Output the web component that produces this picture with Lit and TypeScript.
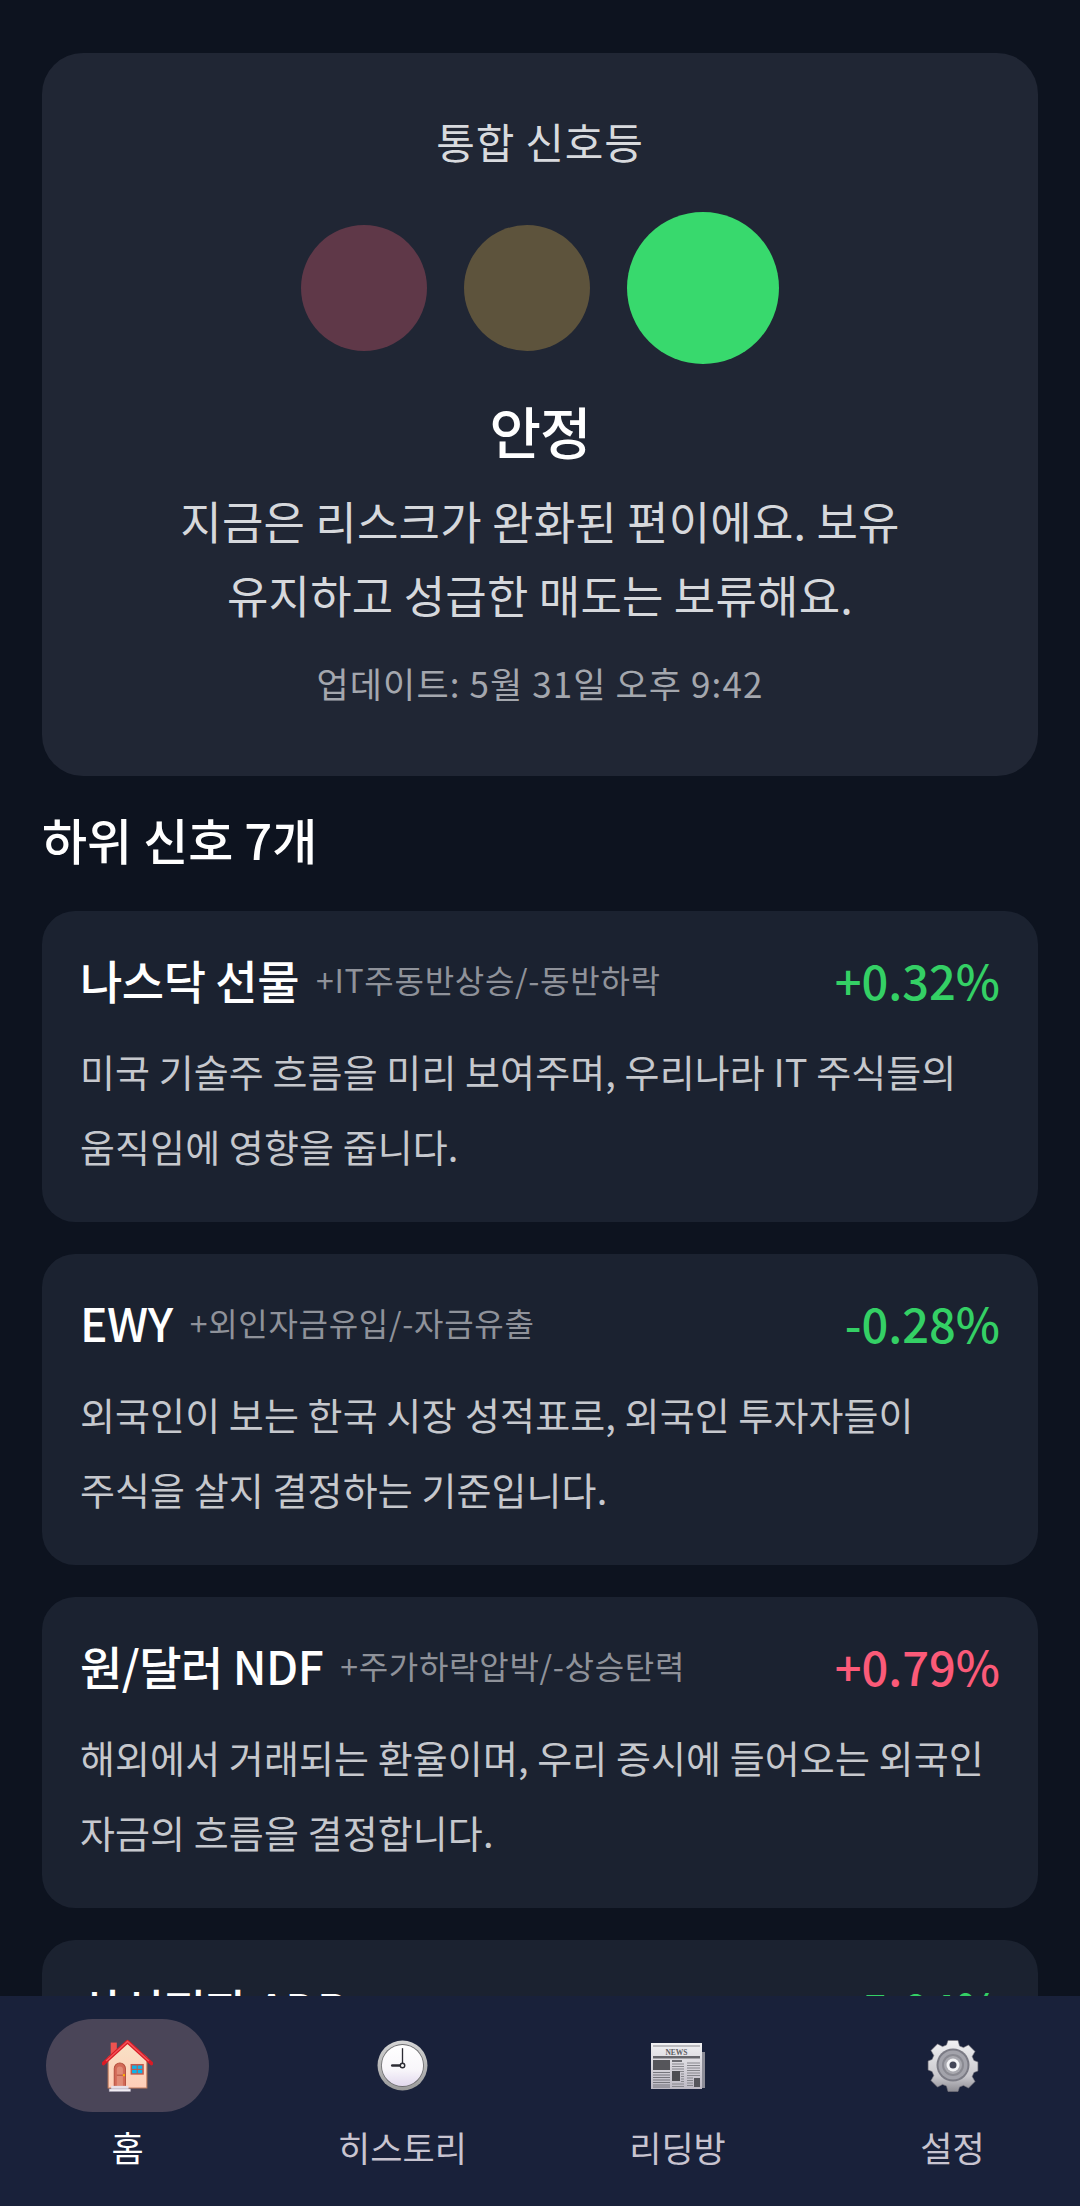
import { LitElement, html, css, svg } from 'lit';
import { customElement } from 'lit/decorators.js';

const signals = [
  { name: '나스닥 선물', hint: '+IT주동반상승/-동반하락', value: '+0.32%', tone: 'up', text: ['미국 기술주 흐름을 미리 보여주며, 우리나라 IT 주식들의', '움직임에 영향을 줍니다.'] },
  { name: 'EWY', hint: '+외인자금유입/-자금유출', value: '-0.28%', tone: 'up', text: ['외국인이 보는 한국 시장 성적표로, 외국인 투자자들이', '주식을 살지 결정하는 기준입니다.'] },
  { name: '원/달러 NDF', hint: '+주가하락압박/-상승탄력', value: '+0.79%', tone: 'down', text: ['해외에서 거래되는 환율이며, 우리 증시에 들어오는 외국인', '자금의 흐름을 결정합니다.'] },
  { name: '삼성전자 ADR', hint: '', value: '-5.04%', tone: 'up', text: ['삼성전자 주가의 흐름을 미리 보여줍니다.'] },
];

const houseIcon = svg`
  <svg viewBox="0 0 50 52" width="51" height="53">
    <defs>
      <linearGradient id="wall" x1="0" y1="0" x2="0" y2="1"><stop offset="0" stop-color="#f8e2c6"/><stop offset="1" stop-color="#ffcdb8"/></linearGradient>
    </defs>
    <rect x="8.500" y="3.500" width="6" height="12" fill="#ef5350"/>
    <path d="M6 18 25 3 44 18V48H6Z" fill="url(#wall)" stroke="#c57d5c" stroke-width="1"/>
    <path d="M1.500 24 25 2.500 48.500 24" fill="none" stroke="#d81b25" stroke-width="3.600" stroke-linejoin="round" stroke-linecap="round"/>
    <path d="M4 21.500 25 2.500 46 21.500" fill="none" stroke="#f4545a" stroke-width="1.400"/>
    <path d="M12 47V29a5.500 5.500 0 0 1 11 0V47Z" fill="#d26a58" stroke="#b5503f" stroke-width="1"/>
    <path d="M14.500 47V30a3 3 0 0 1 6 0V47Z" fill="#e08a76"/>
    <rect x="14.500" y="35" width="6" height="1" fill="#b5503f"/>
    <rect x="20.500" y="34.500" width="2" height="2" fill="#ffb300"/>
    <rect x="28" y="24.500" width="13" height="10.500" fill="#c9584a"/>
    <rect x="29.500" y="26" width="4.500" height="3.300" fill="#0fb4ea"/>
    <rect x="35" y="26" width="4.500" height="3.300" fill="#0fb4ea"/>
    <rect x="29.500" y="30.300" width="4.500" height="3.300" fill="#0fb4ea"/>
    <rect x="35" y="30.300" width="4.500" height="3.300" fill="#0fb4ea"/>
    <rect x="9" y="46" width="17" height="3" fill="#e6dfe8"/>
    <rect x="7" y="49" width="21" height="2.500" fill="#f3eef5" stroke="#a79fb0" stroke-width=".5"/>
  </svg>`;

const clockIcon = svg`
  <svg viewBox="0 0 50 52" width="51" height="53">
    <defs>
      <linearGradient id="rim" x1="0" y1="0" x2="0" y2="1"><stop offset="0" stop-color="#d6d6d6"/><stop offset="1" stop-color="#9a9a9a"/></linearGradient>
      <linearGradient id="face" x1="0" y1="0" x2="0" y2="1"><stop offset="0" stop-color="#ffffff"/><stop offset=".6" stop-color="#f8f6fa"/><stop offset="1" stop-color="#e2d9ee"/></linearGradient>
    </defs>
    <circle cx="25" cy="26" r="24.500" fill="url(#rim)"/>
    <circle cx="25" cy="26" r="21" fill="#6d6d70"/>
    <circle cx="25" cy="26" r="20.200" fill="url(#face)"/>
    <path d="M25 9V26" stroke="#2c2c34" stroke-width="1.300"/>
    <path d="M15 26H25" stroke="#2c2c34" stroke-width="2.600" stroke-linecap="round"/>
    <circle cx="25" cy="26" r="2.200" fill="#f2f2f2" stroke="#2c2c34" stroke-width="1.400"/>
  </svg>`;

const newsIcon = svg`
  <svg viewBox="0 0 54 46" width="54" height="46">
    <defs>
      <linearGradient id="sheet" x1="0" y1="0" x2="0" y2="1"><stop offset="0" stop-color="#f0f0f2"/><stop offset="1" stop-color="#bdb9c4"/></linearGradient>
    </defs>
    <rect x="50" y="9" width="4" height="36" fill="#8d8d97"/>
    <rect x="0" y="0" width="51" height="46" fill="url(#sheet)"/>
    <path d="M2 3H49" stroke="#8b8b90" stroke-width="1"/>
    <text x="25.500" y="11.500" text-anchor="middle" font-family="Liberation Serif, serif" font-size="7.500" font-weight="700" fill="#5c5c62">NEWS</text>
    <rect x="2" y="13" width="47" height="2.500" fill="#66666c"/>
    <rect x="2" y="17" width="17" height="10" fill="#55555a"/>
    <path d="M2 29.500H19M2 32H19M2 34.500H19M2 37H19M2 39.500H19M2 42H19M2 44H19" stroke="#75757c" stroke-width="1"/>
    <rect x="21" y="17" width="10" height="2" fill="#6e6e74"/>
    <path d="M21 21H33M21 23.500H33M21 26H33M21 28.500H33M21 41H33M21 43.500H33M30 31H33M30 33.500H33M30 36H33M30 38.500H33" stroke="#86868c" stroke-width="1"/>
    <rect x="21" y="28" width="8" height="10" fill="#4d4d52"/>
    <path d="M36 20H49M36 22.500H49M36 25H49M36 27.500H49M36 30H49M36 32.500H49M36 35H42M36 37.500H42M36 40H42M36 42.500H42" stroke="#86868c" stroke-width="1"/>
    <rect x="43" y="35" width="6" height="9" fill="#56565c"/>
  </svg>`;

const gearIcon = svg`
  <svg viewBox="0 0 50 54" width="52" height="54">
    <defs>
      <linearGradient id="gear" x1="0" y1="0" x2="0" y2="1"><stop offset="0" stop-color="#f1f1f3"/><stop offset=".7" stop-color="#c9c8cd"/><stop offset="1" stop-color="#8e8d94"/></linearGradient>
    </defs>
    <path d="M20 1.500h10l1.500 5.500 4 1.600 5-2.700 6.500 6.500-2.800 5 1.700 4 4 1.600v9l-4 1.600-1.700 4 2.800 5-6.500 6.500-5-2.700-4 1.600L30 52.500H20L18.500 47l-4-1.600-5 2.700L3 41.600l2.800-5-1.700-4-4-1.600v-9l4-1.600 1.700-4-2.800-5 6.500-6.500 5 2.700 4-1.600Z" fill="url(#gear)" stroke="#77767d" stroke-width=".6" stroke-linejoin="round"/>
    <circle cx="25" cy="26" r="16.500" fill="#7b7b85"/>
    <circle cx="25" cy="26" r="14.500" fill="#a3a3ab"/>
    <circle cx="25" cy="26" r="11" fill="#8a8a92"/>
    <circle cx="25" cy="26" r="9" fill="#a9a9b0"/>
    <circle cx="25" cy="26" r="6.500" fill="#f3f3f5"/>
    <circle cx="25" cy="26" r="3.500" fill="#434657"/>
  </svg>`;

const tabs = [
  { label: '홈', icon: houseIcon, on: true },
  { label: '히스토리', icon: clockIcon, on: false },
  { label: '리딩방', icon: newsIcon, on: false },
  { label: '설정', icon: gearIcon, on: false },
];

@customElement('app-root')
export class AppRoot extends LitElement {
  static styles = css`
    :host {
      display: flex;
      flex-direction: column;
      width: 1080px;
      height: 2206px;
      overflow: hidden;
      background: #0d131f;
      font-family: 'Noto Sans CJK KR', 'Noto Sans', sans-serif;
      color: #fff;
    }

    .scroll {
      flex: 1;
      min-height: 0;
      overflow: hidden;
      padding: 53px 42px 0;
    }

    .hero {
      background: #202634;
      border-radius: 41px;
      height: 723px;
      box-sizing: border-box;
      padding-top: 60px;
      text-align: center;
    }

    .hero-title {
      font-size: 42px;
      line-height: 56px;
      color: #d8dade;
      letter-spacing: 0.8px;
    }

    .lights {
      display: flex;
      align-items: center;
      justify-content: center;
      gap: 37px;
      margin-top: 43px;
    }

    .light {
      width: 126px;
      height: 126px;
      border-radius: 50%;
    }

    .red { background: #5f3848; }
    .amber { background: #5d533c; }
    .green { width: 152px; height: 152px; background: #38d96d; }

    .state {
      margin-top: 33px;
      font-size: 56px;
      line-height: 66px;
      font-weight: 500;
      letter-spacing: -1px;
    }

    .advice {
      margin-top: 21px;
      font-size: 45px;
      line-height: 74px;
      color: #d6d8dc;
      letter-spacing: 0.2px;
    }

    .updated {
      margin-top: 29px;
      font-size: 35px;
      line-height: 44px;
      color: #a4a7ae;
      letter-spacing: 1.1px;
    }

    h2 {
      margin: 34px 0 0;
      font-size: 49px;
      line-height: 58px;
      font-weight: 500;
    }

    .cards {
      display: flex;
      flex-direction: column;
      gap: 32px;
      margin-top: 43px;
    }

    .card {
      background: #1b2230;
      border-radius: 33px;
      height: 311px;
      box-sizing: border-box;
      padding: 40px 38px 0;
    }

    .head {
      display: flex;
      align-items: center;
      height: 56px;
    }

    .name {
      font-size: 46px;
      font-weight: 500;
      letter-spacing: -0.5px;
      white-space: nowrap;
    }

    .hint {
      margin-left: 17px;
      font-size: 32px;
      color: #8f929a;
      letter-spacing: 0.7px;
      white-space: nowrap;
    }

    .value {
      margin-left: auto;
      font-size: 47px;
      font-weight: 500;
    }

    .up { color: #34d065; }
    .down { color: #fb5a78; }

    .desc {
      margin-top: 26px;
      font-size: 38px;
      line-height: 75px;
      color: #c6c8cd;
      letter-spacing: 0.1px;
      white-space: nowrap;
    }

    nav {
      flex: none;
      display: flex;
      gap: 112px;
      height: 210px;
      background: #19213a;
      box-sizing: border-box;
      padding: 23px 0 0 46px;
    }

    .tab {
      display: flex;
      flex-direction: column;
      align-items: center;
      flex: none;
      width: 163px;
    }

    .icon {
      display: flex;
      align-items: center;
      justify-content: center;
      width: 163px;
      height: 93px;
      border-radius: 47px;
    }

    .on .icon { background: #4a4558; }

    .label {
      margin-top: 12px;
      font-size: 35px;
      line-height: 46px;
      color: #c8c4d0;
      white-space: nowrap;
    }

    .on .label { color: #fff; }
  `;

  render() {
    return html`
      <div class="scroll">
        <section class="hero">
          <div class="hero-title">통합 신호등</div>
          <div class="lights">
            <div class="light red"></div>
            <div class="light amber"></div>
            <div class="light green"></div>
          </div>
          <div class="state">안정</div>
          <div class="advice">지금은 리스크가 완화된 편이에요. 보유<br />유지하고 성급한 매도는 보류해요.</div>
          <div class="updated">업데이트: 5월 31일 오후 9:42</div>
        </section>
        <h2>하위 신호 7개</h2>
        <div class="cards">
          ${signals.map(
            (s) => html`
              <article class="card">
                <div class="head">
                  <span class="name">${s.name}</span>
                  <span class="hint">${s.hint}</span>
                  <span class="value ${s.tone}">${s.value}</span>
                </div>
                <div class="desc">${s.text.map((t) => html`<div>${t}</div>`)}</div>
              </article>
            `
          )}
        </div>
      </div>
      <nav>
        ${tabs.map(
          (t) => html`
            <div class="tab ${t.on ? 'on' : ''}">
              <div class="icon">${t.icon}</div>
              <div class="label">${t.label}</div>
            </div>
          `
        )}
      </nav>
    `;
  }
}
